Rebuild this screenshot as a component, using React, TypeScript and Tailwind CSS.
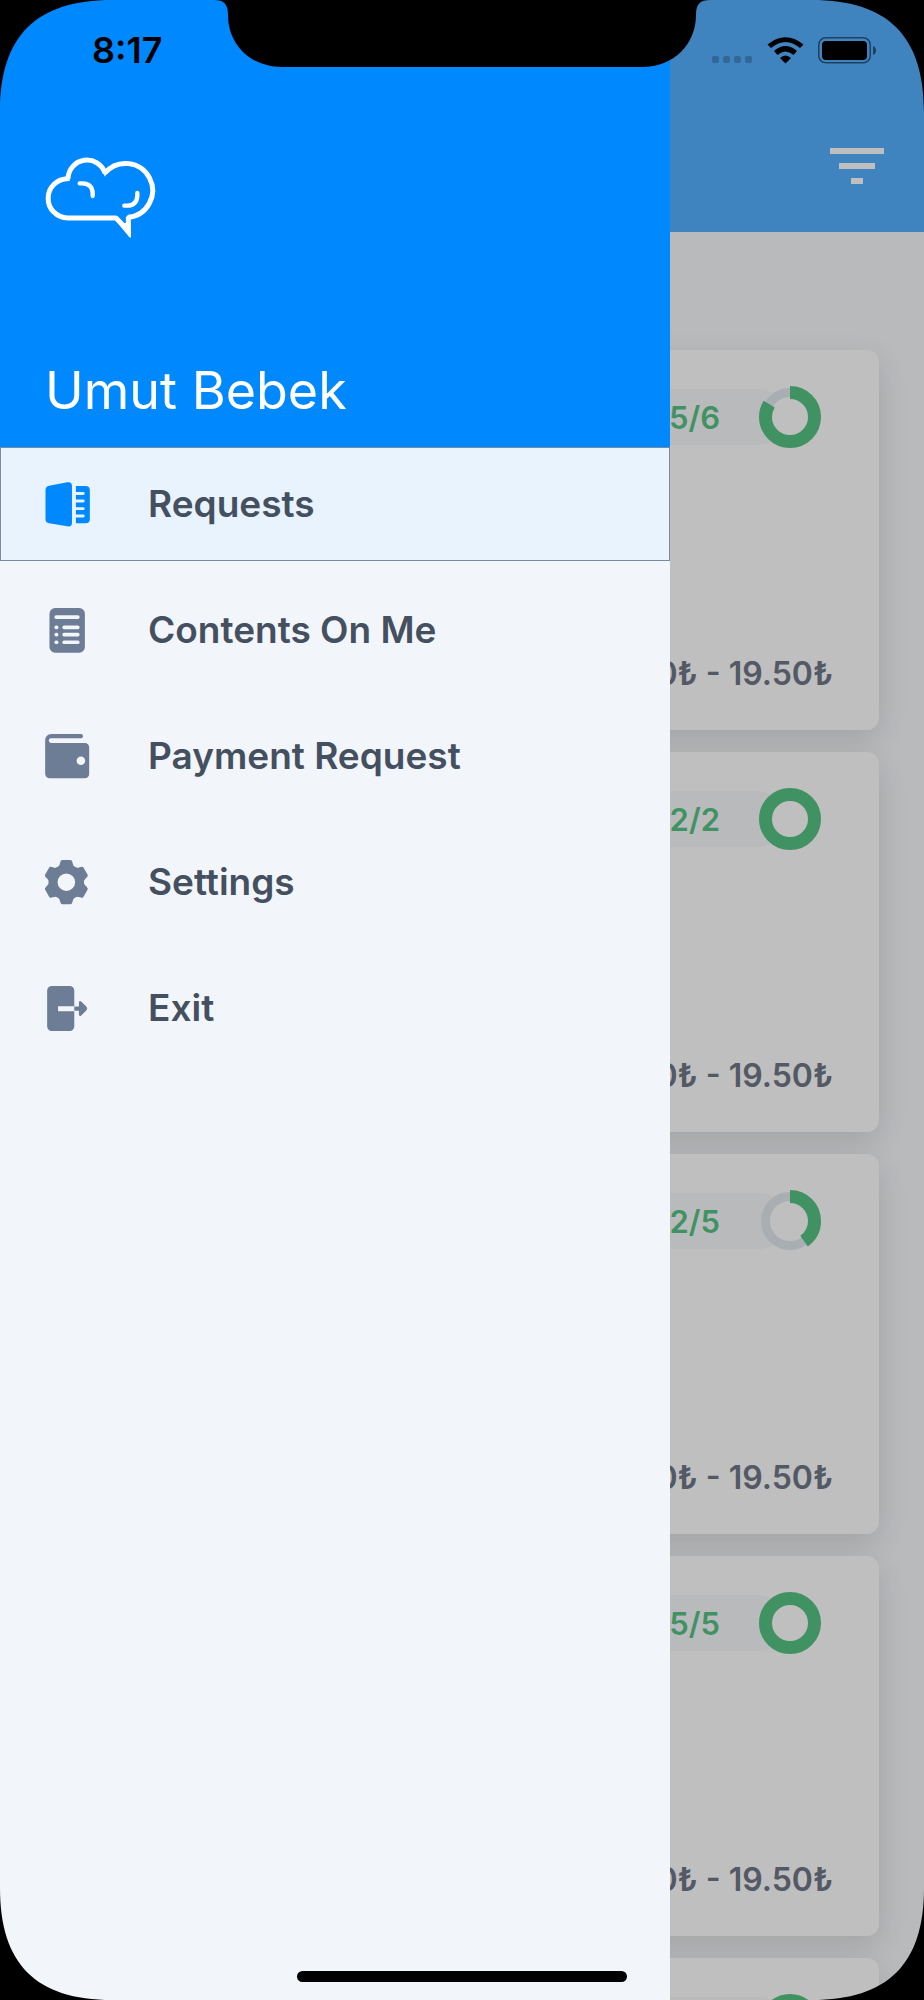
import type { ReactNode } from "react";

type Offer = { done: number; total: number; price: string };

const offers: Offer[] = [
  { done: 5, total: 6, price: "9.50₺ - 19.50₺" },
  { done: 2, total: 2, price: "9.50₺ - 19.50₺" },
  { done: 2, total: 5, price: "9.50₺ - 19.50₺" },
  { done: 5, total: 5, price: "9.50₺ - 19.50₺" },
  { done: 3, total: 3, price: "9.50₺ - 19.50₺" },
];

function Glyph({ children }: { children: ReactNode }) {
  return (
    <svg viewBox="0 0 135 136" className="size-[45px] shrink-0" fill="currentColor" aria-hidden="true">
      {children}
    </svg>
  );
}

function RequestsIcon() {
  return (
    <Glyph>
      <path d="M12 11 67 1Q81-1 81 12V123Q81 137 67 134L12 125Q1 123 1 112V24Q1 13 12 11Z" />
      <path d="M93 12H122Q135 12 135 25V112Q135 125 122 125H93V107H115a4.500 4.500 0 0 0 0-9H93V85H115a4.500 4.500 0 0 0 0-9H93V62H115a4.500 4.500 0 0 0 0-9H93V39H115a4.500 4.500 0 0 0 0-9H93Z" />
    </Glyph>
  );
}

function ContentsIcon() {
  return (
    <Glyph>
      <rect x="13" y="0" width="107" height="135" rx="17" />
      <g fill="#f2f5fa">
        <rect x="28" y="22" width="76" height="11" rx="5" />
        {[53, 75, 98].map((y) => (
          <g key={y}>
            <rect x="28" y={y} width="12" height="11" rx="5" />
            <rect x="52" y={y} width="52" height="11" rx="5" />
          </g>
        ))}
      </g>
    </Glyph>
  );
}

function WalletIcon() {
  return (
    <Glyph>
      <path
        fillRule="evenodd"
        d="M18 0H108a6.500 6.500 0 0 1 0 13H18a7 7 0 0 0 0 14H120a13 13 0 0 1 13 13V121a13 13 0 0 1-13 13H14A14 14 0 0 1 0 120V18A18 18 0 0 1 18 0ZM108 68a13 13 0 1 0 0 26a13 13 0 1 0 0-26Z"
      />
    </Glyph>
  );
}

function GearIcon() {
  return (
    <Glyph>
      <g transform="translate(64 67)">
        <circle r="40" fill="none" stroke="currentColor" strokeWidth="27" />
        {[0, 60, 120, 180, 240, 300].map((a) => (
          <path key={a} transform={`rotate(${a})`} d="M-27-45Q-20-49-19-58L-17-64Q-16-67-11-67H11Q16-67 17-64L19-58Q20-49 27-45Z" />
        ))}
      </g>
    </Glyph>
  );
}

function ExitIcon() {
  return (
    <Glyph>
      <path d="M20 0H74A14 14 0 0 1 88 14V61H39V76H88V122A14 14 0 0 1 74 136H20A14 14 0 0 1 6 122V14A14 14 0 0 1 20 0Z" />
      <path d="M88 62H102V49Q104 43 109 47L125 63Q129 68 125 73L109 89Q104 93 102 87V75H88Z" />
    </Glyph>
  );
}

const menu = [
  { label: "Requests", icon: <RequestsIcon />, active: true },
  { label: "Contents On Me", icon: <ContentsIcon />, active: false },
  { label: "Payment Request", icon: <WalletIcon />, active: false },
  { label: "Settings", icon: <GearIcon />, active: false },
  { label: "Exit", icon: <ExitIcon />, active: false },
];

function Logo() {
  return (
    <svg viewBox="44 52 330 240" className="h-20 w-[110px] overflow-visible" fill="none" stroke="#fff" role="img" aria-label="Cloud logo">
      <path
        strokeWidth="15"
        d="M113 114A59 59 0 0 0 112 232H257L294 270V230A81 81 0 1 0 224 97A57 57 0 0 0 113 114Z"
        strokeLinejoin="bevel"
      />
      <path stroke="none" fill="#fff" d="M216 93 224 108 232 93ZM106 106V121H120Z" />
      <path strokeWidth="13" strokeLinecap="round" d="M148 128H157Q187 130 187 158V166M321 157V164Q320 194 291 195H282" />
      <path stroke="none" fill="#fff" d="M254 237 264 247H302V289Q301 293 297 290Z" />
    </svg>
  );
}

function Ring({ done, total }: { done: number; total: number }) {
  const length = 2 * Math.PI * 24.5;
  return (
    <svg viewBox="-31 -31 62 62" className="-ml-7 size-[62px] shrink-0" aria-hidden="true">
      <circle r="24" fill="#fff" />
      <circle r="24.500" fill="none" stroke="#e0e8ee" strokeWidth="9" />
      <circle
        r="24.500"
        fill="none"
        stroke="#57c383"
        strokeWidth="13"
        strokeDasharray={`${(length * done) / total} ${length}`}
        transform="rotate(-90)"
      />
    </svg>
  );
}

function OfferCard({ offer }: { offer: Offer }) {
  return (
    <article className="flex h-[380px] shrink-0 flex-col justify-between rounded-xl bg-white pt-9 pb-7 shadow-[0_10px_30px_rgba(0,0,0,0.12)]">
      <div className="flex items-center justify-end pr-[58px]">
        <p className="flex h-14 w-60 items-center justify-end rounded-full bg-[#f7f9fb] pr-[67px] text-[31px] leading-none font-semibold text-[#57c383]">
          {offer.done}/{offer.total}
        </p>
        <Ring done={offer.done} total={offer.total} />
      </div>
      <p className="pr-[46px] text-right text-[32px] leading-[56px] font-semibold text-[#6f7787]">{offer.price}</p>
    </article>
  );
}

function Corner({ className }: { className: string }) {
  return (
    <svg viewBox="0 0 112 112" className={`pointer-events-none absolute size-28 ${className}`} aria-hidden="true">
      <path d="M0 0H112C36 0 0 36 0 112Z" />
    </svg>
  );
}

function StatusBar() {
  return (
    <div className="pointer-events-none absolute inset-x-0 top-0 flex h-[100px] items-center justify-between pr-12 pl-[92px] text-black">
      <time className="text-[36px] font-semibold">8:17</time>
      <svg viewBox="0 0 496 67" className="absolute top-0 left-1/2 h-[67px] w-[496px] -translate-x-1/2" aria-hidden="true">
        <path d="M0 0H496C486 0 482 4 482 15C482 44 460 67 428 67H68C36 67 14 44 14 15C14 4 10 0 0 0Z" />
      </svg>
      <svg viewBox="0 0 164 28" className="h-7 w-[164px]" aria-hidden="true">
        <g fillOpacity="0.2">
          <rect x="0" y="20" width="7" height="7" rx="2" />
          <rect x="11" y="20" width="7" height="7" rx="2" />
          <rect x="22" y="20" width="7" height="7" rx="2" />
          <rect x="33" y="20" width="7" height="7" rx="2" />
        </g>
        <path d="M55.500 8.500Q73.500-6 91.500 8.500L88 12Q73.500 0 59 12ZM62 15Q73.500 5 85 15L81.500 19Q73.500 12 65.500 19ZM68 22Q73.500 17 79 22L73.500 27.500Z" />
        <rect x="106.750" y="1.750" width="51.500" height="25" rx="7" fill="none" stroke="#000" strokeOpacity="0.5" strokeWidth="1.500" />
        <rect x="110" y="5" width="45" height="19" rx="4" />
        <path fillOpacity="0.5" d="M161 10Q164 11 164 14.500T161 19Z" />
      </svg>
    </div>
  );
}

export default function App() {
  return (
    <div className="relative h-screen overflow-hidden bg-[#f6f8fb] font-['Inter',sans-serif]">
      <main className="flex h-full flex-col">
        <header className="flex h-58 shrink-0 items-end justify-end bg-[#55afff] px-10 pb-12">
          <button type="button" aria-label="Filter" className="flex w-[54px] flex-col items-center gap-[9px]">
            <span className="h-1.5 w-[54px] bg-white" />
            <span className="h-1.5 w-9 bg-white" />
            <span className="h-1.5 w-3 bg-white" />
          </button>
        </header>
        <section aria-label="Requests" className="flex min-h-0 flex-1 flex-col gap-[22px] overflow-hidden px-[45px] pt-[118px]">
          {offers.map((offer, i) => (
            <OfferCard key={i} offer={offer} />
          ))}
        </section>
      </main>

      <div className="absolute inset-0 bg-black/25" />

      <aside className="absolute inset-y-0 left-0 flex w-[72.5%] flex-col bg-[#f2f5fa]">
        <div className="flex h-[447px] shrink-0 flex-col justify-between bg-[#0088ff] px-[45px] pt-[158px] pb-6">
          <Logo />
          <h1 className="text-[52px] leading-[64px] text-white">Umut Bebek</h1>
        </div>
        <nav aria-label="Main" className="flex flex-col gap-3">
          {menu.map(({ label, icon, active }) => (
            <a
              key={label}
              href="#"
              aria-current={active ? "page" : undefined}
              className={
                active
                  ? "flex h-[114px] items-center gap-[58px] border border-[#7a8aa5] bg-[#e8f3fd] px-11 text-[#0088ff]"
                  : "flex h-[114px] items-center gap-[58px] border border-transparent px-11 text-[#6d7d95]"
              }
            >
              {icon}
              <span className="text-[37px] font-semibold text-[#445060]">{label}</span>
            </a>
          ))}
        </nav>
      </aside>

      <StatusBar />
      <Corner className="top-0 left-0" />
      <Corner className="top-0 right-0 -scale-x-100" />
      <Corner className="bottom-0 left-0 -scale-y-100" />
      <Corner className="right-0 bottom-0 rotate-180" />
      <div className="absolute bottom-[18px] left-1/2 h-[11px] w-[330px] -translate-x-1/2 rounded-full bg-black" />
    </div>
  );
}
